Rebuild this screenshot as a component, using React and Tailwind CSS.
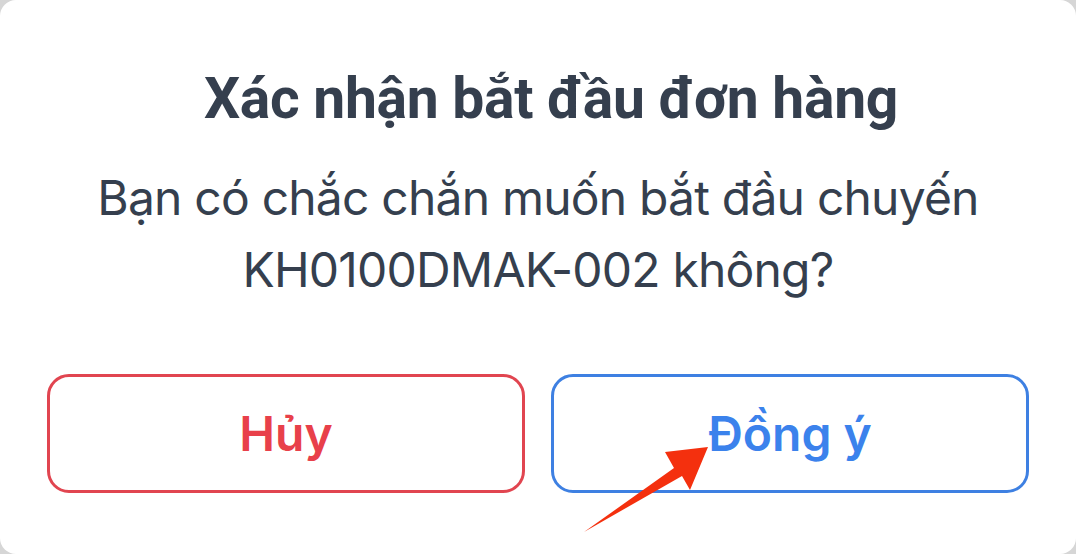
import React from 'react';

function Arrow() {
  return (
    <svg className="absolute left-0 top-0 pointer-events-none" width="1076" height="554" viewBox="0 0 1076 554">
      <polygon
        points="584,532 674,468 665,452 708,447 690,490 682,476"
        fill="#f4300e"
      />
    </svg>
  );
}

export default function App() {
  return (
    <div className="relative w-[1076px] h-[554px] overflow-hidden bg-[#d6d6d6]" style={{ fontFamily: 'Inter, "Noto Sans", sans-serif' }}>
      <div className="w-full h-full bg-white rounded-[16px] flex flex-col items-center">
        <h1
          className="mt-[65px] pl-[26px] text-[57px] leading-[68px] font-bold text-[#353f4e] tracking-[-0.3px]"
          style={{ fontFamily: 'Roboto, Inter, sans-serif' }}
        >
          Xác nhận bắt đầu đơn hàng
        </h1>
        <p className="mt-[29px] text-center text-[48px] leading-[72px] text-[#353f4e] tracking-[-0.8px]">
          Bạn có chắc chắn muốn bắt đầu chuyến
          <br />
          KH0100DMAK-002 không?
        </p>
        <div className="mt-[68px] w-full px-[47px] flex gap-[26px]">
          <button className="flex-1 h-[119px] rounded-[22px] border-[3px] border-[#e14550] text-[#e8404a] text-[48px] font-semibold">
            Hủy
          </button>
          <button className="flex-1 h-[119px] rounded-[22px] border-[3px] border-[#3e80e2] text-[#3b82ec] text-[48px] font-semibold">
            Đồng ý
          </button>
        </div>
      </div>
      <Arrow />
    </div>
  );
}
